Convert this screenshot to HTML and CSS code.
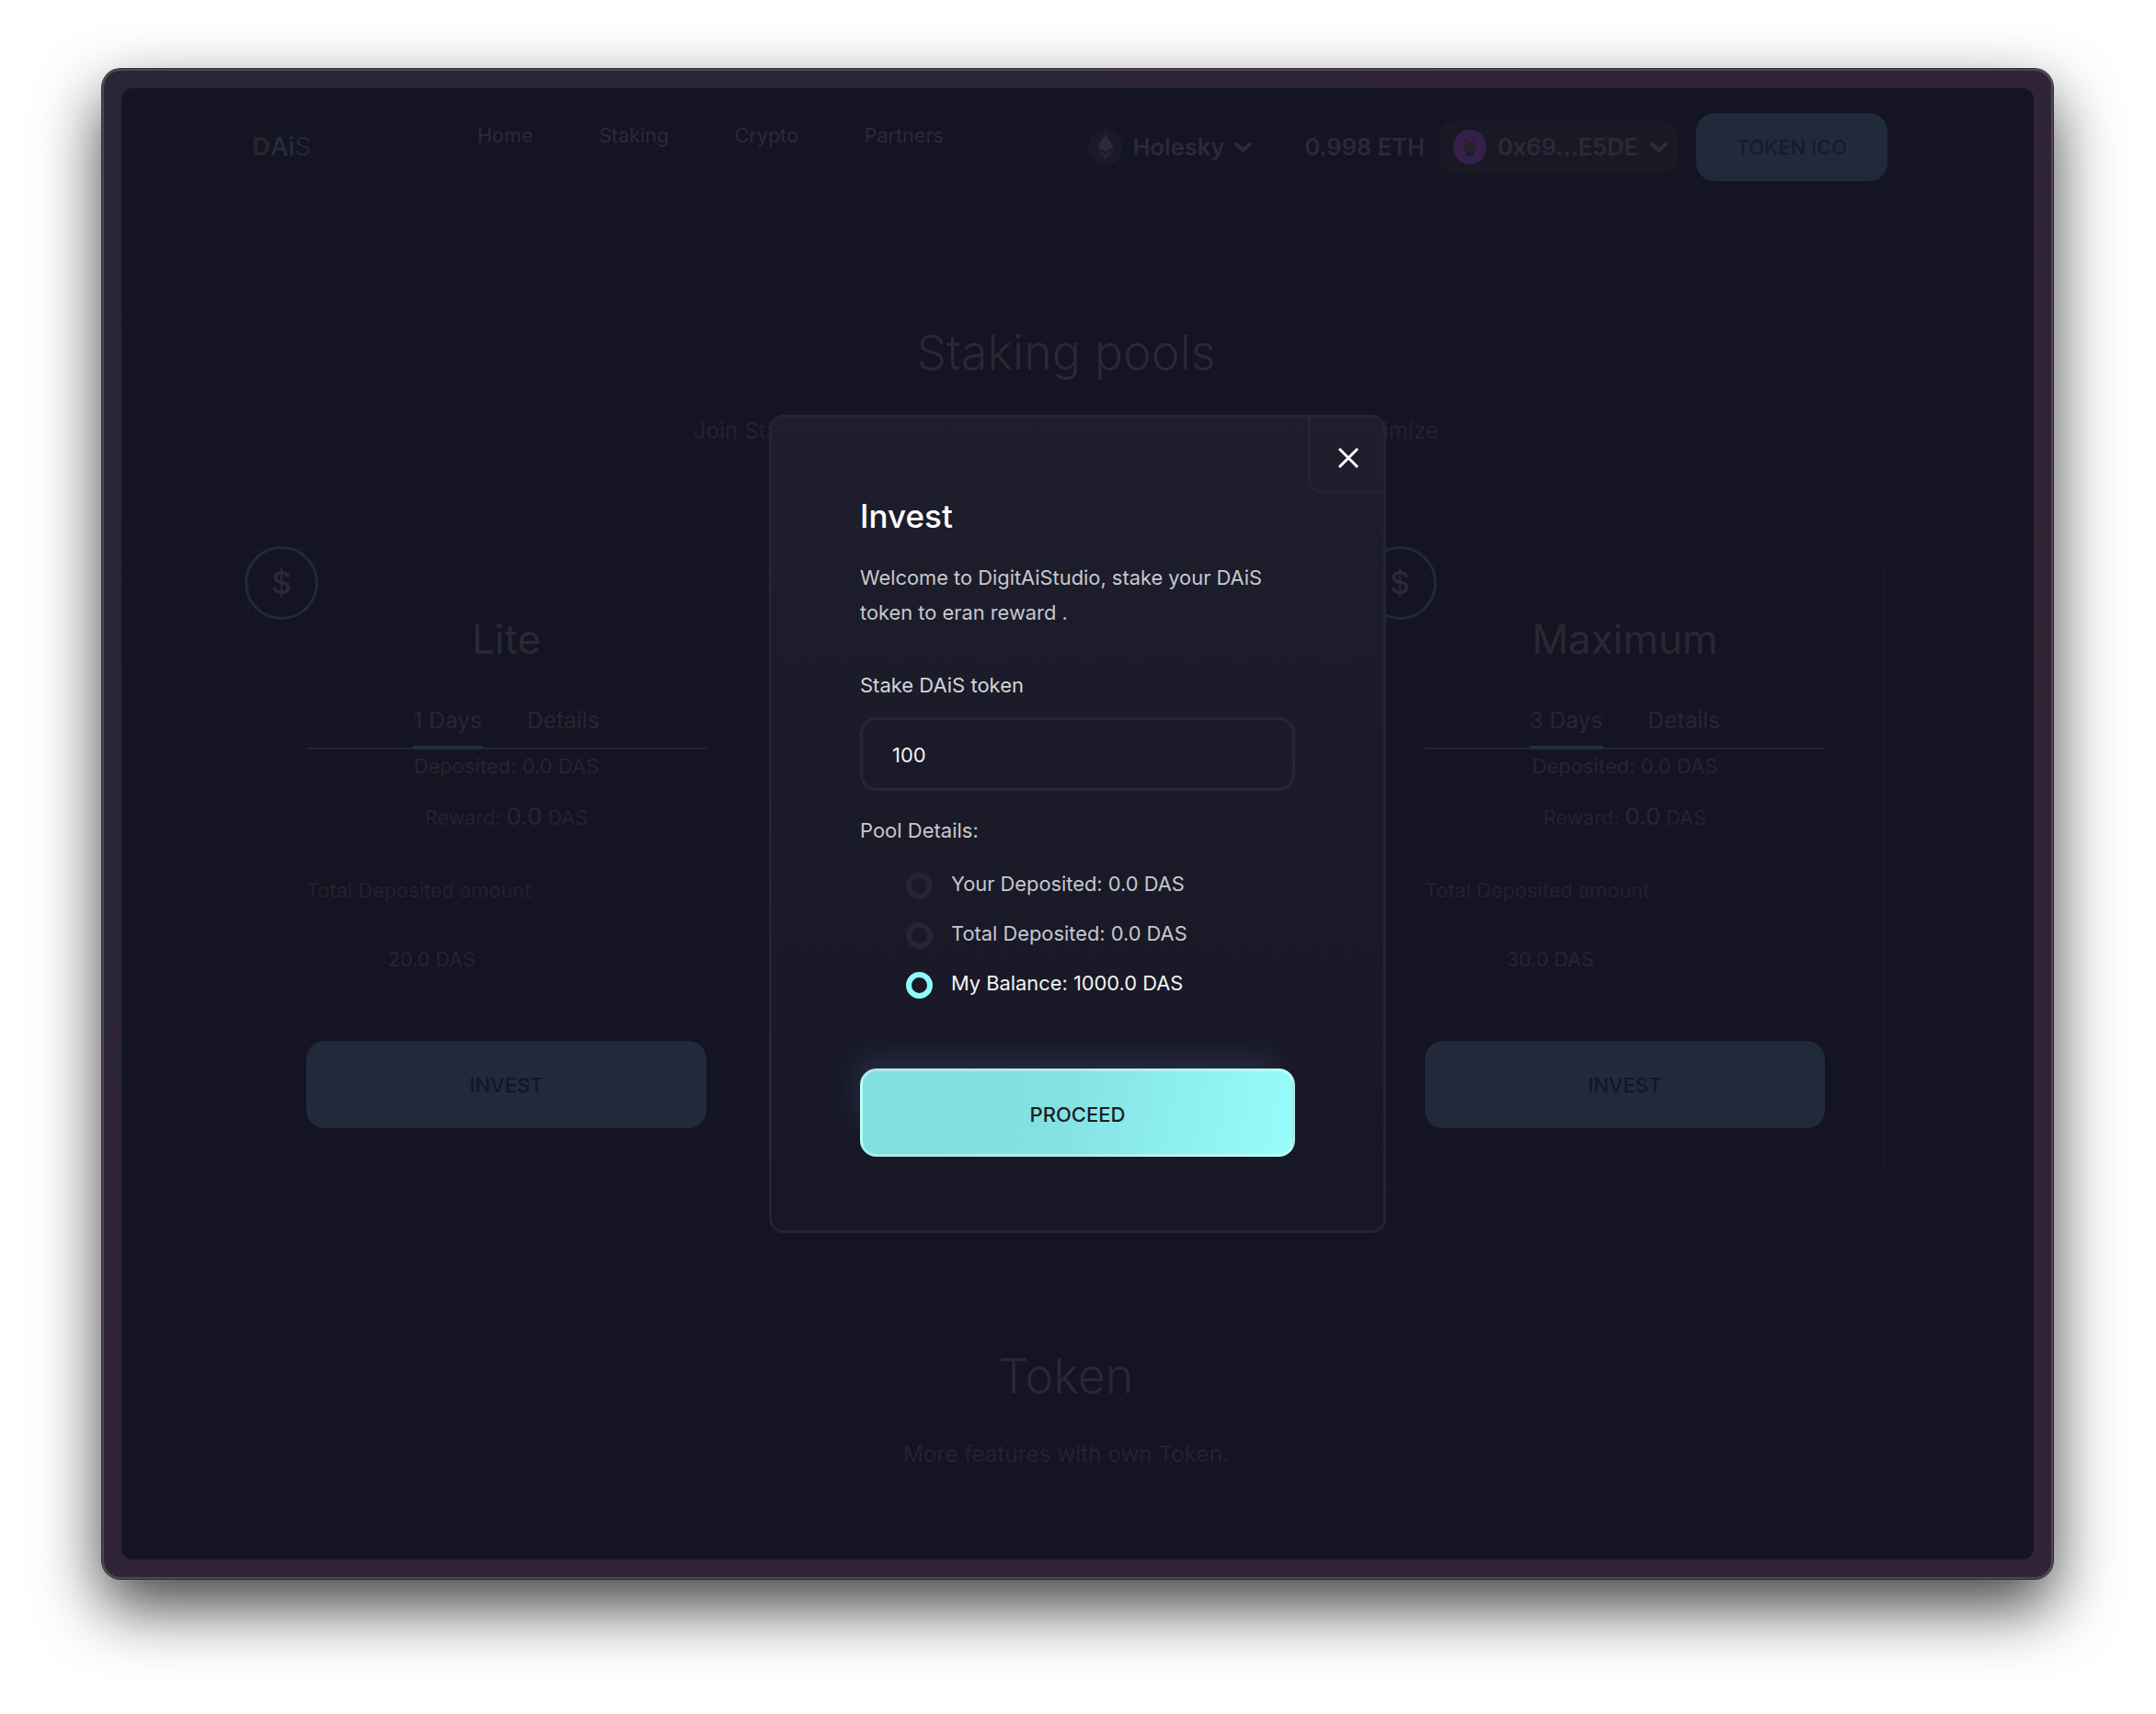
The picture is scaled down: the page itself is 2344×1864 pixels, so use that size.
FILE: index.html
```html
<!DOCTYPE html>
<html>
<head>
  <title>DAiS - Staking pools</title>
  <link rel="stylesheet" href="styles.css">
</head>
<body>
  <div class="frame">
    <div class="screen">
      <div class="content">
        <nav class="nav">
          <div class="logo"><b>D</b><span class="logo-ai">Ai</span><span class="logo-s">S</span></div>
          <div class="nav-links">
            <a>Home</a>
            <a>Staking</a>
            <a>Crypto</a>
            <a>Partners</a>
          </div>
          <div class="nav-right">
            <div class="network">
              <span class="eth-icon">
                <svg width="18" height="28" viewBox="0 0 18 28">
                  <polygon points="9,0 18,14.2 9,19 0,14.2" fill="#2b2b39"/>
                  <polygon points="0,16.4 9,21.2 18,16.4 9,28" fill="#262633"/>
                </svg>
              </span>
              <span>Holesky</span>
              <svg class="chevron" width="21" height="12" viewBox="0 0 21 12"><path d="M2 2 L10.500 9.500 L19 2" /></svg>
            </div>
            <div class="balance">0.998 ETH</div>
            <div class="wallet">
              <span class="avatar">
                <svg width="36" height="38" viewBox="0 0 36 38">
                  <path d="M11 9 L16 15 M25 9 L20 15" stroke="#27222f" stroke-width="2" fill="none"/>
                  <ellipse cx="18" cy="20" rx="7" ry="6.500" fill="#27222f"/>
                  <ellipse cx="18" cy="26" rx="4" ry="3" fill="#1f1b27"/>
                </svg>
              </span>
              <span>0x69...E5DE</span>
              <svg class="chevron" width="21" height="12" viewBox="0 0 21 12"><path d="M2 2 L10.500 9.500 L19 2" /></svg>
            </div>
            <button class="btn-ico">TOKEN ICO</button>
          </div>
        </nav>

        <h1 class="heading heading-first">Staking pools</h1>
        <p class="subheading">Join Staking pools and start earning rewards on your token to optimize</p>

        <div class="pools">
          <div class="pool">
            <div class="coin">$</div>
            <h2 class="pool-name">Lite</h2>
            <div class="tabs">
              <span class="tab tab-active">1 Days</span>
              <span class="tab">Details</span>
            </div>
            <div class="deposited">Deposited: 0.0 DAS</div>
            <div class="reward">Reward: <span class="reward-num">0.0</span> DAS</div>
            <div class="total-label">Total Deposited amount</div>
            <div class="total-box">20.0 DAS</div>
            <button class="btn-invest">INVEST</button>
          </div>

          <div class="pool-hidden"></div>

          <div class="pool">
            <div class="coin">$</div>
            <h2 class="pool-name">Maximum</h2>
            <div class="tabs">
              <span class="tab tab-active">3 Days</span>
              <span class="tab">Details</span>
            </div>
            <div class="deposited">Deposited: 0.0 DAS</div>
            <div class="reward">Reward: <span class="reward-num">0.0</span> DAS</div>
            <div class="total-label">Total Deposited amount</div>
            <div class="total-box">30.0 DAS</div>
            <button class="btn-invest">INVEST</button>
          </div>
        </div>

        <h1 class="heading heading-token">Token</h1>
        <p class="subheading subheading-token">More features with own Token.</p>
        <div class="token-card"></div>
      </div>

      <div class="overlay">
        <div class="modal">
          <button class="modal-close">
            <svg width="24" height="24" viewBox="0 0 24 24"><path d="M2 2 L22 22 M22 2 L2 22" /></svg>
          </button>
          <h2 class="modal-title">Invest</h2>
          <p class="modal-desc">Welcome to DigitAiStudio, stake your DAiS token to eran reward .</p>
          <label class="field-label">Stake DAiS token</label>
          <input class="field-input" type="text" value="100">
          <div class="details-label">Pool Details:</div>
          <div class="details">
            <label class="detail"><input type="radio" name="pool"><span>Your Deposited: 0.0 DAS</span></label>
            <label class="detail"><input type="radio" name="pool"><span>Total Deposited: 0.0 DAS</span></label>
            <label class="detail detail-on"><input type="radio" name="pool" checked><span>My Balance: 1000.0 DAS</span></label>
          </div>
          <button class="btn-proceed">PROCEED</button>
        </div>
      </div>
    </div>
  </div>
</body>
</html>
```

FILE: styles.css
```css
* {
  box-sizing: border-box;
}
body {
  height: 100vh;
  margin: 0;
  padding: 75px 0 0 111px;
  background: #fff;
  font-family: Inter, "Liberation Sans", sans-serif;
}
h1, h2, p {
  margin: 0;
  font-weight: 400;
}
button {
  font-family: inherit;
  border: 0;
}

.frame {
  width: 2121px;
  height: 1642px;
  padding: 21px;
  border-radius: 20px;
  background: linear-gradient(135deg, #272636 0%, #2f2435 45%, #302335 100%);
  box-shadow: inset 0 0 0 2px #4b4756, 0 0 0 1px #2a2a30, 0 30px 70px rgba(0,0,0,0.75);
}
.screen {
  position: relative;
  height: 1600px;
  border-radius: 12px;
  background: #151422;
  overflow: hidden;
}
.content {
  width: 1780px;
  margin-left: 137px;
  padding-top: 26px;
}

/* nav */
.nav {
  display: flex;
  align-items: flex-start;
  width: 1783px;
  height: 75px;
}
.logo {
  margin: 20px 0 0 5px;
  width: 63px;
  font-size: 27.5px;
  line-height: 34px;
  color: #25252f;
  white-space: nowrap;
}
.logo-ai {
  color: #22303e;
  font-weight: 500;
}
.logo-s {
  font-weight: 300;
  color: #2a2a36;
}
.nav-links {
  display: flex;
  gap: 71.5px;
  margin: 11px 0 0 182px;
  font-size: 21.6px;
  line-height: 28px;
  color: #2a2a38;
}
.nav-right {
  display: flex;
  align-items: center;
  height: 75px;
  margin-left: auto;
  font-size: 25.5px;
  font-weight: 600;
  color: #2a2a38;
}
.network {
  display: flex;
  align-items: center;
  gap: 10px;
}
.eth-icon {
  display: flex;
  align-items: center;
  justify-content: center;
  width: 38px;
  height: 38px;
  border-radius: 50%;
  background: #1a1a28;
}
.chevron {
  fill: none;
  stroke: #2c2c3a;
  stroke-width: 4;
}
.balance {
  margin: 0 16px 0 56px;
}
.wallet {
  display: flex;
  align-items: center;
  gap: 12px;
  height: 56px;
  padding: 0 10px 0 15px;
  border-radius: 14px;
  background: #191926;
}
.avatar {
  display: flex;
  width: 36px;
  height: 38px;
  border-radius: 50%;
  background: #35204b;
}
.btn-ico {
  width: 208px;
  height: 74px;
  margin-left: 20px;
  border-radius: 20px;
  background: #212a3a;
  color: #181a2c;
  font-size: 22px;
  font-weight: 500;
}

/* headings */
.heading {
  font-size: 52px;
  line-height: 68px;
  font-weight: 300;
  text-align: center;
  color: #292936;
}
.heading-first {
  margin-top: 153px;
}
.heading-token {
  margin-top: 168px;
}
.subheading {
  margin-top: 34px;
  font-size: 24.3px;
  line-height: 32px;
  text-align: center;
  color: #23232f;
  white-space: nowrap;
}

/* pools */
.pools {
  display: grid;
  grid-template-columns: 564px 564px 564px;
  gap: 44px;
  margin-top: 111px;
}
.pool {
  position: relative;
  height: 700px;
  padding: 70px 63px 0 62px;
  border: 2px solid #171725;
  border-radius: 20px;
  text-align: center;
}
.coin {
  position: absolute;
  left: -5px;
  top: -3px;
  width: 80px;
  height: 80px;
  border: 3px solid #1f2b3b;
  border-radius: 50%;
  font-size: 34px;
  line-height: 74px;
  font-weight: 500;
  color: #2a2a38;
}
.pool-name {
  font-size: 44px;
  line-height: 56px;
  color: #292936;
}
.tabs {
  display: flex;
  justify-content: center;
  gap: 49px;
  height: 48px;
  margin-top: 44px;
  border-bottom: 2px solid #242532;
  font-size: 24.5px;
  line-height: 32px;
  color: #272733;
}
.tab {
  height: 48px;
}
.tab-active {
  border-bottom: 4px solid #1f3040;
  border-radius: 0 0 2px 2px;
}
.deposited {
  margin-top: 4px;
  font-size: 22px;
  line-height: 28px;
  color: #252530;
}
.reward {
  margin-top: 25px;
  font-size: 21.5px;
  line-height: 32px;
  color: #232330;
}
.reward-num {
  font-size: 26px;
  color: #272733;
}
.total-label {
  margin-top: 49px;
  font-size: 21.8px;
  line-height: 28px;
  text-align: left;
  color: #22222e;
}
.total-box {
  height: 77px;
  margin-top: 21px;
  padding: 24px 0 0 87px;
  border: 2px solid #171725;
  border-radius: 16px;
  font-size: 21.5px;
  line-height: 28px;
  text-align: left;
  color: #252531;
}
.btn-invest {
  display: block;
  width: 100%;
  height: 95px;
  margin-top: 52px;
  border-radius: 20px;
  background: #212a3a;
  color: #151525;
  font-size: 22px;
  font-weight: 500;
}
.pool-hidden {
  height: 700px;
}
.token-card {
  height: 120px;
  margin-top: 70px;
  border: 2px solid #171725;
  border-radius: 20px;
}

/* modal */
.overlay {
  position: absolute;
  inset: 0;
  display: flex;
  align-items: center;
  justify-content: center;
}
.modal {
  position: relative;
  width: 671px;
  height: 890px;
  padding: 85px 96px 0;
  border: 3px solid #252532;
  border-radius: 16px;
  background: linear-gradient(180deg, #1e1e2d 0%, #1a1a29 45%, #171726 100%);
  color: #c8c8cc;
}
.modal-close {
  position: absolute;
  top: -3px;
  right: -3px;
  display: flex;
  align-items: center;
  justify-content: center;
  width: 85px;
  height: 86px;
  padding: 10px 0 0;
  border-left: 3px solid #252532;
  border-bottom: 3px solid #252532;
  border-radius: 0 16px 0 16px;
  background: transparent;
}
.modal-close path {
  stroke: #fff;
  stroke-width: 3;
  fill: none;
}
.modal-title {
  font-size: 35px;
  line-height: 44px;
  font-weight: 500;
  color: #fff;
}
.modal-desc {
  margin-top: 26px;
  font-size: 21.85px;
  line-height: 38px;
}
.field-label {
  display: block;
  margin-top: 46px;
  font-size: 22px;
  line-height: 28px;
  color: #d4d4d8;
}
.field-input {
  display: block;
  width: 473px;
  height: 80px;
  margin-top: 21px;
  padding: 2px 0 0 32px;
  border: 3px solid #272734;
  border-radius: 18px;
  background: #1a1a28;
  font-family: inherit;
  font-size: 22px;
  color: #f2f2f2;
}
.details-label {
  margin-top: 29px;
  font-size: 22px;
  line-height: 28px;
}
.details {
  display: flex;
  flex-direction: column;
  gap: 23px;
  margin-top: 30px;
  padding-left: 50px;
  font-size: 21.85px;
  line-height: 28px;
}
.detail {
  display: flex;
  align-items: flex-start;
  gap: 20px;
}
.detail input {
  appearance: none;
  width: 29px;
  height: 29px;
  margin: 2px 0 0;
  border: 6px solid #262632;
  border-radius: 50%;
}
.detail-on {
  color: #f4f4f4;
}
.detail-on input {
  border-color: #8ffbfb;
}
.btn-proceed {
  display: block;
  width: 473px;
  height: 96px;
  margin-top: 76px;
  padding-top: 4px;
  border: 3px solid rgba(255,255,255,0.35);
  border-radius: 18px;
  background: linear-gradient(100deg, #80dfe0 0%, #84e1e2 45%, #96fdfb 100%);
  box-shadow: -12px -24px 28px -10px #252c3e;
  color: #1b1e22;
  font-size: 22px;
  font-weight: 500;
}
```
